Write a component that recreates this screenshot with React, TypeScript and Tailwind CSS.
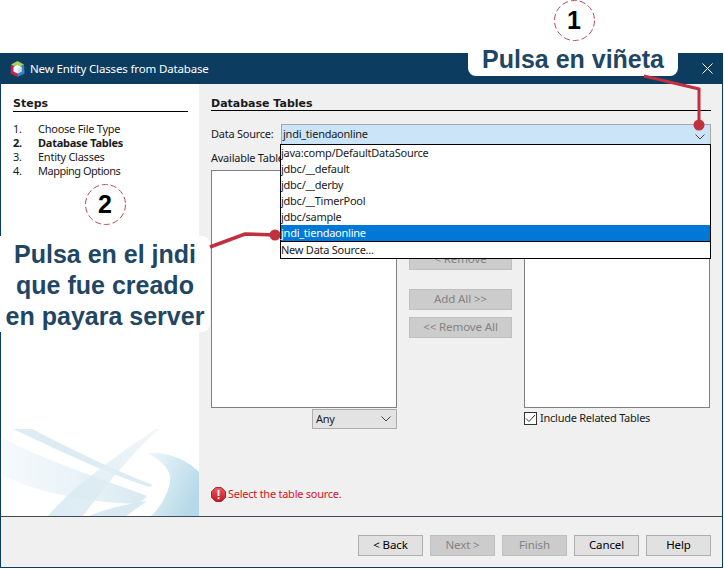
const ui = { fontFamily: '"Noto Sans", Tahoma, sans-serif' };
const heading = { fontFamily: '"DejaVu Sans", sans-serif' };
const callout = { fontFamily: '"Liberation Sans", Arial, sans-serif' };

function Logo() {
  return (
    <svg width="15" height="16" viewBox="0 0 15 16" className="shrink-0">
      <polygon points="7.5,0 14,3.5 7.5,7.5 1,3.5" fill="#a9cf55" />
      <polygon points="1,3.5 7.5,7.5 7.5,16 0.5,12.5" fill="#c2244f" />
      <polygon points="14,3.5 7.5,7.5 7.5,16 14.5,12.5" fill="#3b82c4" />
      <polygon points="7.5,4 11.5,6 11.5,10.5 7.5,12.5 3.5,10.5 3.5,6" fill="#f4f8fb" />
      <polygon points="7.5,8 11.5,6 11.5,10.5 7.5,12.5" fill="#c9dff0" />
    </svg>
  );
}

function Chevron() {
  return (
    <svg width="10" height="6" viewBox="0 0 10 6" fill="none" stroke="#444" strokeWidth="1">
      <path d="M0.5 0.5 L5 5 L9.5 0.5" />
    </svg>
  );
}

function Btn({ label, off, className }: { label: string; off?: boolean; className?: string }) {
  return (
    <div
      className={`h-[21px] pb-[2px] flex items-center justify-center border leading-none text-[11.5px] tracking-[-0.1px] ${
        off ? "bg-[#cccccc] border-[#bfbfbf] text-[#838383]" : "bg-[#e1e1e1] border-[#adadad] text-black"
      } ${className ?? ""}`}
    >
      {label}
    </div>
  );
}

function Swoosh() {
  return (
    <svg width="198" height="87" viewBox="0 0 198 87" className="block shrink-0">
      <defs>
        <linearGradient id="fadeA" x1="0" x2="1" y1="0" y2="0">
          <stop offset="0" stopColor="#eef6fa" stopOpacity="0.6" />
          <stop offset="1" stopColor="#d8e9f1" />
        </linearGradient>
        <linearGradient id="fadeB" x1="0" x2="1" y1="0" y2="0.6">
          <stop offset="0" stopColor="#f1f8fb" />
          <stop offset="1" stopColor="#b5d9e8" />
        </linearGradient>
        <linearGradient id="fadeC" x1="1" x2="0" y1="0" y2="1">
          <stop offset="0" stopColor="#ebf4f8" />
          <stop offset="1" stopColor="#d2e6ef" />
        </linearGradient>
      </defs>
      <path d="M2 9 C40 30 90 46 146 67 L138 75 L146 75 C95 75 45 66 2 47 Z" fill="url(#fadeA)" />
      <path d="M12 0 L31 0 C70 20 110 40 152 56 L148 58 C100 42 55 20 12 0 Z" fill="#ddecf3" />
      <path d="M155 0 L158 0 C130 25 102 60 82 87 L47 87 C70 60 110 30 155 0 Z" fill="url(#fadeC)" fillOpacity="0.8" />
      <path d="M146 24 C165 22 185 30 198 43 L198 87 L150 87 C160 78 170 60 169 48 C168 38 158 30 146 24 Z" fill="url(#fadeB)" />
      <path d="M88 87 C105 80 125 75 146 72 L125 87 Z" fill="#d8e9f1" />
      <path d="M146 64 L166 50 M152 67 L168 55" stroke="#ffffff" strokeWidth="2" />
    </svg>
  );
}

function ErrorIcon() {
  return (
    <svg width="15" height="15" viewBox="0 0 16 16" className="shrink-0">
      <defs>
        <linearGradient id="err" x1="0" x2="0" y1="0" y2="1">
          <stop offset="0" stopColor="#ea5a5f" />
          <stop offset="1" stopColor="#c4161f" />
        </linearGradient>
      </defs>
      <polygon points="5,0.5 11,0.5 15.5,5 15.5,11 11,15.5 5,15.5 0.5,11 0.5,5" fill="url(#err)" stroke="#b01c24" />
      <rect x="7" y="3" width="2" height="6.5" fill="#ffffff" />
      <rect x="7" y="11" width="2" height="2" fill="#ffffff" />
    </svg>
  );
}

const sources = [
  "java:comp/DefaultDataSource",
  "jdbc/__default",
  "jdbc/__derby",
  "jdbc/__TimerPool",
  "jdbc/sample",
];

export default function App() {
  return (
    <div className="relative w-[724px] h-[569px] bg-white overflow-hidden text-[11px] tracking-[-0.25px] text-[#1a1a1a]" style={ui}>
      <div className="pt-[53px] pr-[1px]">
        <div className="h-[515px] flex flex-col border-x border-b border-[#0d3c61]">
          {/* title bar */}
          <div className="h-[31px] shrink-0 bg-[#0d3c61] flex items-center pl-[9px] pr-[9px] text-white text-[11.5px] tracking-[-0.15px]">
            <Logo />
            <span className="ml-[5px]">New Entity Classes from Database</span>
            <svg className="ml-auto" width="11" height="11" viewBox="0 0 11 11" stroke="#ffffff" strokeWidth="1">
              <path d="M0.5 0.5 L10.5 10.5 M10.5 0.5 L0.5 10.5" />
            </svg>
          </div>

          {/* body */}
          <div className="flex h-[433px] shrink-0 border-b border-[#3c4a55]">
            <div className="w-[198px] shrink-0 bg-white flex flex-col">
              <div className="pt-[13px] pl-[12px] pr-[11px]">
                <div className="font-bold text-[11px] tracking-normal leading-[13px] border-b border-black pb-[1px] h-[15px]" style={heading}>
                  Steps
                </div>
                <div className="mt-[10px] grid grid-cols-[25px_1fr] leading-[14px]">
                  <span>1.</span>
                  <span>Choose File Type</span>
                  <span className="font-bold">2.</span>
                  <span className="font-bold">Database Tables</span>
                  <span>3.</span>
                  <span>Entity Classes</span>
                  <span>4.</span>
                  <span className="tracking-[-0.5px]">Mapping Options</span>
                </div>
              </div>
              <div className="mt-auto">
                <Swoosh />
              </div>
            </div>

            <div className="flex-1 bg-[#f0f0f0] pt-[13px] pl-[12px] pr-[11px] flex flex-col">
              <div className="font-bold text-[11px] tracking-normal leading-[13px] border-b border-black h-[14px]" style={heading}>
                Database Tables
              </div>
              <div className="mt-[13px] flex items-center h-[21px]">
                <span className="w-[70px] shrink-0">Data Source:</span>
                <div className="flex-1 h-full bg-[#cce4f7] border border-[#a6a6a6] flex items-center pl-[1px] pr-[5px]">
                  <span>jndi_tiendaonline</span>
                  <span className="ml-auto mt-[4px]">
                    <Chevron />
                  </span>
                </div>
              </div>
              <div className="mt-[6px] leading-[14px] h-[19px]">Available Tables:</div>

              <div className="flex">
                <div className="w-[186px] shrink-0">
                  <div className="h-[238px] bg-white border border-[#7f7f7f]" />
                  <div className="mt-[1px] ml-[101px] w-[85px] h-[20px] bg-[#e3e3e3] border border-[#adadad] flex items-center pl-[3px] pr-[5px]">
                    <span>Any</span>
                    <span className="ml-auto">
                      <Chevron />
                    </span>
                  </div>
                </div>

                <div className="w-[103px] ml-[12px] shrink-0 pt-[52px]">
                  <Btn off label="Add >" />
                  <Btn off label="< Remove" className="mt-[6px]" />
                  <Btn off label="Add All >>" className="mt-[19px]" />
                  <Btn off label="<< Remove All" className="mt-[7px]" />
                </div>

                <div className="w-[186px] ml-[12px] shrink-0">
                  <div className="h-[238px] bg-white border border-[#7f7f7f]" />
                  <div className="mt-[3px] flex items-center h-[14px]">
                    <span className="w-[13px] h-[13px] bg-white border border-[#333] flex items-center justify-center">
                      <svg width="11" height="9" viewBox="0 0 11 9" fill="none" stroke="#333" strokeWidth="1">
                        <path d="M1 4.5 L4 7.5 L10 1" />
                      </svg>
                    </span>
                    <span className="ml-[3px]">Include Related Tables</span>
                  </div>
                </div>
              </div>

              <div className="mt-[57px] flex items-center h-[16px] text-[#d9121f]">
                <ErrorIcon />
                <span className="ml-[2px]">Select the table source.</span>
              </div>
            </div>
          </div>

          {/* footer */}
          <div className="flex-1 bg-[#f0f0f0] flex justify-end items-start gap-[7px] pt-[18px] pr-[11px]">
            <Btn label="< Back" className="w-[65px]" />
            <Btn off label="Next >" className="w-[65px]" />
            <Btn off label="Finish" className="w-[65px]" />
            <Btn label="Cancel" className="w-[65px]" />
            <Btn label="Help" className="w-[65px]" />
          </div>
        </div>
      </div>

      {/* open combo list */}
      <div className="absolute left-[280px] top-[144px] w-[431px] h-[115px] bg-white border border-black leading-[16px]">
        {sources.map((s) => (
          <div key={s} className="h-[16px]">
            {s}
          </div>
        ))}
        <div className="h-[16px] bg-[#0078d7] text-white">jndi_tiendaonline</div>
        <div className="border-t border-black h-[18px] leading-[16px]">New Data Source...</div>
      </div>

      {/* annotations */}
      <div className="absolute left-[468px] top-[53px] w-[210px] h-[23px] bg-white rounded-b-[8px] flex items-center justify-center text-[#1f4664] text-[25px] tracking-normal font-bold leading-none" style={callout}>
        <span className="-mt-[10px] whitespace-nowrap">Pulsa en viñeta</span>
      </div>
      <div className="absolute left-0 top-[236px] w-[210px] h-[96px] pt-[2px] bg-white rounded-r-[8px] flex flex-col items-center justify-center text-[#1f4664] text-[25px] tracking-normal font-bold leading-[31px] whitespace-nowrap" style={callout}>
        <span>Pulsa en el jndi</span>
        <span>que fue creado</span>
        <span>en payara server</span>
      </div>
      <svg className="absolute left-0 top-0" width="724" height="569" viewBox="0 0 724 569" fill="none">
        <circle cx="574.5" cy="20.5" r="20" stroke="#b84a5a" strokeWidth="1" strokeDasharray="6 3" fill="#ffffff" />
        <circle cx="105.5" cy="204.5" r="20" stroke="#b84a5a" strokeWidth="1" strokeDasharray="6 3" fill="#ffffff" />
        <path d="M644 76 L699 89 L699 125" stroke="#c0303f" strokeWidth="3" />
        <circle cx="699" cy="125" r="5.5" fill="#c0303f" />
        <path d="M210 247 L245 234 L275 235" stroke="#c0303f" strokeWidth="3.5" />
        <circle cx="275" cy="235" r="5.5" fill="#c0303f" />
      </svg>
      <span className="absolute left-[567px] top-[6px] text-[25px] tracking-normal leading-[28px] font-bold text-black" style={callout}>1</span>
      <span className="absolute left-[98px] top-[190px] text-[25px] tracking-normal leading-[28px] font-bold text-black" style={callout}>2</span>
    </div>
  );
}
